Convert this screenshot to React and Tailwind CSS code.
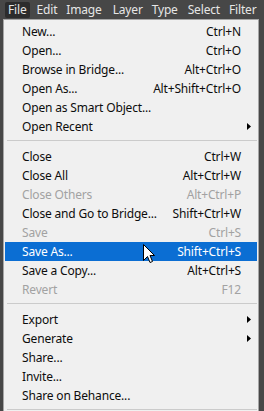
import React from "react";

const items = [
  { label: "New...", sc: "Ctrl+N" },
  { label: "Open...", sc: "Ctrl+O" },
  { label: "Browse in Bridge...", sc: "Alt+Ctrl+O" },
  { label: "Open As...", sc: "Alt+Shift+Ctrl+O" },
  { label: "Open as Smart Object..." },
  { label: "Open Recent", sub: true },
  { sep: true },
  { label: "Close", sc: "Ctrl+W" },
  { label: "Close All", sc: "Alt+Ctrl+W" },
  { label: "Close Others", sc: "Alt+Ctrl+P", dis: true },
  { label: "Close and Go to Bridge...", sc: "Shift+Ctrl+W" },
  { label: "Save", sc: "Ctrl+S", dis: true },
  { label: "Save As...", sc: "Shift+Ctrl+S", hl: true },
  { label: "Save a Copy...", sc: "Alt+Ctrl+S" },
  { label: "Revert", sc: "F12", dis: true },
  { sep: true },
  { label: "Export", sub: true },
  { label: "Generate", sub: true },
  { label: "Share..." },
  { label: "Invite..." },
  { label: "Share on Behance..." },
  { sep: true },
];

function Arrow() {
  return (
    <svg width="4" height="7" viewBox="0 0 4 7" className="block">
      <path d="M0 0 L4 3.5 L0 7 Z" fill="#000" />
    </svg>
  );
}

function Cursor() {
  return (
    <svg
      width="12"
      height="20"
      viewBox="0 0 12 20"
      className="absolute left-[138px] top-[2px]"
    >
      <path
        d="M0.5 0.5 L0.5 16.5 L4.5 12.5 L7 18.5 L9.5 17.5 L7 11.5 L11.5 11.5 Z"
        fill="#fff"
        stroke="#000"
        strokeWidth="1"
        strokeLinejoin="miter"
      />
    </svg>
  );
}

export default function App() {
  const font = { fontFamily: '"Noto Sans", "Liberation Sans", sans-serif' };
  return (
    <div
      className="w-[264px] h-[411px] bg-[#474747] overflow-hidden text-[12px] leading-none tracking-[-0.17px]"
      style={font}
    >
      <div className="h-[19px] flex items-center text-[#e6e6e6] pl-[5px]">
        <div className="h-[16px] mt-[1px] px-[3px] flex items-center bg-[#2c2c2c] rounded-[2px]">
          File
        </div>
        <span className="ml-[7px]">Edit</span>
        <span className="ml-[9px]">Image</span>
        <span className="ml-[11px]">Layer</span>
        <span className="ml-[9px]">Type</span>
        <span className="ml-[10px]">Select</span>
        <span className="ml-[9px]">Filter</span>
      </div>
      <div className="ml-[3px] w-[256px] h-[400px] bg-[#f0f0f0] border border-[#a6a6a6] pt-[2px]">
        {items.map((it, i) =>
          it.sep ? (
            <div key={i} className="h-[11px] pt-[4px] pl-[3px] pr-[1px]">
              <div className="h-[1px] bg-[#cbcbcb]" />
            </div>
          ) : (
            <div
              key={i}
              className={
                "relative h-[19px] mx-[1px] pl-[17px] pr-[6px] flex items-center " +
                (it.hl
                  ? "bg-[#0b6ed3] text-white"
                  : it.dis
                  ? "text-[#a2a2a2]"
                  : "text-[#0d0d0d]")
              }
            >
              <span className="flex-1 whitespace-nowrap">{it.label}</span>
              {it.sc && <span className="whitespace-nowrap">{it.sc}</span>}
              <span className="w-[10px] flex justify-end">
                {it.sub && <Arrow />}
              </span>
              {it.hl && <Cursor />}
            </div>
          )
        )}
      </div>
    </div>
  );
}
